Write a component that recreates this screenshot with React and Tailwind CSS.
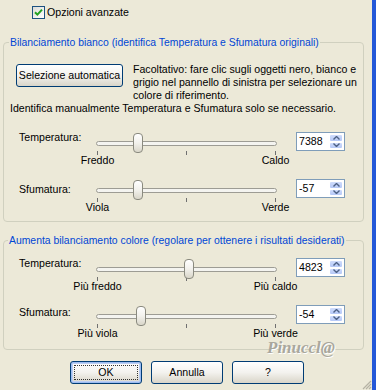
import React from 'react'

const Checkbox = () => (
  <div className="w-[13px] h-[13px] border border-[#1c5180] bg-linear-to-br from-[#dcdcd7] to-white flex items-center justify-center">
    <svg width="9" height="9" viewBox="0 0 9 9">
      <path d="M1 4.2 L3.4 6.6 L8 1.6" fill="none" stroke="#21a121" strokeWidth="2" />
    </svg>
  </div>
)

const XpButton = ({ children, width, primary }) => (
  <div
    className={`relative h-[23px] rounded-[3px] border border-[#003c74] bg-linear-to-b from-white via-[#f3f2ee] to-[#d9d5c9] flex items-center justify-center whitespace-nowrap ${width} ${primary ? 'shadow-[inset_0_0_0_1px_#9cbcf0,inset_0_0_0_2px_#bccef3]' : ''}`}
  >
    {primary && <span className="absolute inset-[3px] border border-dotted border-[#333]" />}
    <span>{children}</span>
  </div>
)

// small blue spinner arrows
const Arrow = ({ up }) => (
  <div className="flex-1 rounded-[2px] border border-white bg-linear-to-b from-[#cfdcfc] to-[#b5c8f7] flex items-center justify-center">
    <svg width="7" height="4" viewBox="0 0 7 4">
      <path d={up ? 'M0.5 3.5 L3.5 0.5 L6.5 3.5' : 'M0.5 0.5 L3.5 3.5 L6.5 0.5'} fill="none" stroke="#4d6185" strokeWidth="1.4" />
    </svg>
  </div>
)

const Spin = ({ value }) => (
  <div className="w-[49px] h-[19px] border border-[#7f9db9] bg-white flex">
    <div className="flex-1 pl-[2px] leading-[17px]">{value}</div>
    <div className="w-[15px] flex flex-col py-px pr-px">
      <Arrow up />
      <Arrow />
    </div>
  </div>
)

const Slider = ({ pos, left, right }) => (
  <div className="w-[181px] flex flex-col">
    <div className="relative h-[20px] flex items-center">
      <div className="w-full h-[5px] rounded-[3px] border border-[#9d9c94] bg-[#f4f4f0]" />
      <div
        className="absolute top-0 w-[10px] h-[20px] rounded-[4px] border border-[#8a8a7f] bg-linear-to-b from-white via-[#f2f1ec] to-[#d9d6c9]"
        style={{ left: pos - 5 }}
      />
    </div>
    <div className="-mt-[2px] h-[4px] flex justify-between px-[1px]">
      <div className="w-px h-full bg-[#707070]" />
      <div className="w-px h-full bg-[#707070]" />
      <div className="w-px h-full bg-[#707070]" />
    </div>
    <div className="-mt-[1px] flex justify-between px-[1px]">
      <div className="w-px flex justify-center whitespace-nowrap">{left}</div>
      <div className="w-px flex justify-center whitespace-nowrap">{right}</div>
    </div>
  </div>
)

const Row = ({ label, pos, left, right, value, className, labelClass }) => (
  <div className={`flex items-start ${className}`}>
    <div className={`ml-[15px] w-[77px] ${labelClass}`}>{label}</div>
    <Slider pos={pos} left={left} right={right} />
    <div className="ml-[19px] -mt-[1px]">
      <Spin value={value} />
    </div>
  </div>
)

export default function App() {
  return (
    <div className="w-[376px] h-[390px] bg-[#ece9d8] border-r-4 border-[#2458d8] relative overflow-hidden flex flex-col font-['Liberation_Sans',sans-serif] text-[10.6px] leading-[13px] text-black">
      <div className="mt-[6px] ml-[32px] flex items-center gap-[2px] h-[13px]">
        <Checkbox />
        <span>Opzioni avanzate</span>
      </div>

      {/* Bilanciamento bianco */}
      <fieldset className="mt-[17px] ml-[3px] mr-[8px] border border-[#d0d0bf] rounded-[4px] pb-[7px]">
        <legend className="ml-[5px] px-[1px] text-[10.4px] text-[#0046d5] whitespace-nowrap">
          Bilanciamento bianco (identifica Temperatura e Sfumatura originali)
        </legend>
        <div className="mt-[14px] flex items-start">
          <div className="ml-[12px] mt-[1px]">
            <XpButton width="w-[107px]">Selezione automatica</XpButton>
          </div>
          <div className="ml-[10px] whitespace-nowrap">
            Facoltativo: fare clic sugli oggetti nero, bianco e<br />
            grigio nel pannello di sinistra per selezionare un<br />
            colore di riferimento.
          </div>
        </div>
        <div className="ml-[6px] whitespace-nowrap">
          Identifica manualmente Temperatura e Sfumatura solo se necessario.
        </div>
        <Row className="mt-[18px]" labelClass="-mt-[2px]" label="Temperatura:" pos={42} left="Freddo" right="Caldo" value="7388" />
        <Row className="mt-[13px]" labelClass="mt-[3px]" label="Sfumatura:" pos={42} left="Viola" right="Verde" value="-57" />
      </fieldset>

      {/* Aumenta bilanciamento colore */}
      <fieldset className="mt-[12px] ml-[3px] mr-[8px] border border-[#d0d0bf] rounded-[4px] pb-[9px]">
        <legend className="ml-[4px] px-[1px] text-[10.4px] text-[#0046d5] whitespace-nowrap">
          Aumenta bilanciamento colore (regolare per ottenere i risultati desiderati)
        </legend>
        <Row className="mt-[12px]" labelClass="-mt-[2px]" label="Temperatura:" pos={93} left="Più freddo" right="Più caldo" value="4823" />
        <Row className="mt-[13px]" labelClass="mt-[0px]" label="Sfumatura:" pos={45} left="Più viola" right="Più verde" value="-54" />
      </fieldset>

      <div className="mt-[11px] pl-[70px] flex gap-[9px]">
        <XpButton width="w-[72px]" primary>OK</XpButton>
        <XpButton width="w-[72px]">Annulla</XpButton>
        <XpButton width="w-[72px]">?</XpButton>
      </div>

      {/* watermark */}
      <div className="absolute left-[267px] top-[341px] font-['Liberation_Serif',serif] italic font-bold text-[17px] leading-[14px] text-[#a9a79d] [text-shadow:1px_1px_0_#fff]">
        Pinuccl@
      </div>

      {/* resize grip */}
      <svg className="absolute right-0 bottom-0" width="11" height="11" viewBox="0 0 11 11">
        <path d="M10 2 L2 10 M10 5 L5 10 M10 8 L8 10" stroke="#b5b2a4" strokeWidth="1.2" />
      </svg>
    </div>
  )
}
